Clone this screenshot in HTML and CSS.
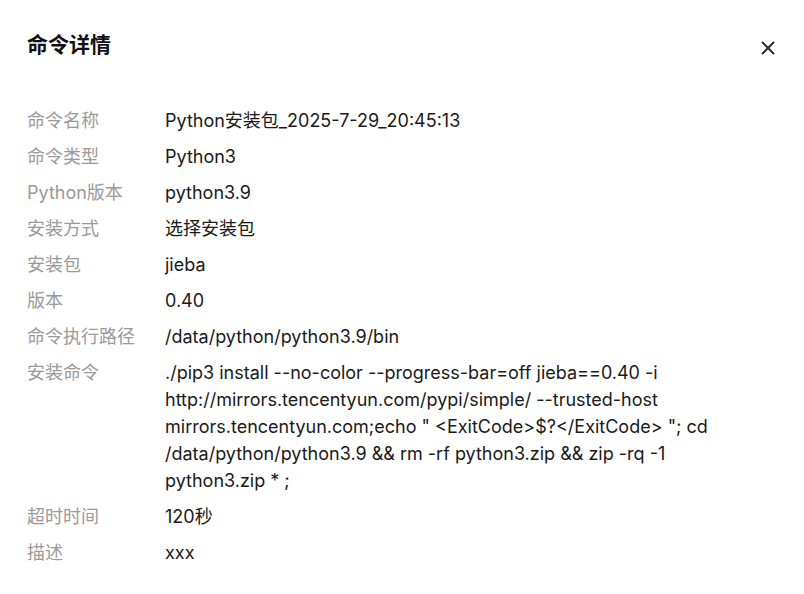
FILE: index.html
```html
<!DOCTYPE html>
<html lang="zh-CN">
<head>
<meta charset="utf-8">
<link rel="stylesheet" href="styles.css">
</head>
<body>
<div class="dialog">
  <div class="header">
    <h1 class="title">命令详情</h1>
    <button class="close" aria-label="关闭">
      <svg width="14" height="14" viewBox="0 0 14 14"><path d="M1.5 1.5L12.5 12.5M12.5 1.5L1.5 12.5" stroke="#222" stroke-width="1.8" stroke-linecap="round"/></svg>
    </button>
  </div>
  <dl class="details">
    <div class="row"><dt>命令名称</dt><dd>Python安装包_2025-7-29_20:45:13</dd></div>
    <div class="row"><dt>命令类型</dt><dd>Python3</dd></div>
    <div class="row"><dt>Python版本</dt><dd>python3.9</dd></div>
    <div class="row"><dt>安装方式</dt><dd>选择安装包</dd></div>
    <div class="row"><dt>安装包</dt><dd>jieba</dd></div>
    <div class="row"><dt>版本</dt><dd>0.40</dd></div>
    <div class="row"><dt>命令执行路径</dt><dd>/data/python/python3.9/bin</dd></div>
    <div class="row"><dt>安装命令</dt><dd>./pip3 install --no-color --progress-bar=off jieba==0.40 -i http://mirrors.tencentyun.com/pypi/simple/ --trusted-host mirrors.tencentyun.com;echo " &lt;ExitCode&gt;$?&lt;/ExitCode&gt; "; cd /data/python/python3.9 &amp;&amp; rm -rf python3.zip &amp;&amp; zip -rq -1 python3.zip * ;</dd></div>
    <div class="row"><dt>超时时间</dt><dd>120秒</dd></div>
    <div class="row"><dt>描述</dt><dd>xxx</dd></div>
  </dl>
</div>
</body>
</html>
```
FILE: styles.css
```css
* { box-sizing: border-box; }
html, body { margin: 0; padding: 0; background: #fff; }
body {
  font-family: "Inter", "Noto Sans CJK SC", sans-serif;
  color: #1a1a1a;
}
.dialog {
  width: 804px;
  height: 594px;
  padding: 30px 27px 0 27px;
}
.header {
  display: flex;
  align-items: center;
  justify-content: space-between;
  height: 30px;
}
.title {
  margin: 0;
  font-size: 21px;
  font-weight: 700;
  line-height: 30px;
  color: #111;
}
.close {
  border: 0;
  background: none;
  padding: 0;
  margin-right: 1px;
  margin-top: 6px;
  width: 16px;
  height: 16px;
  display: flex;
  align-items: center;
  justify-content: center;
  cursor: pointer;
}
.details {
  margin: 47px 0 0 0;
  display: flex;
  flex-direction: column;
  gap: 9px;
}
.row {
  display: flex;
  font-size: 18px;
  line-height: 27px;
}
.row dt {
  width: 138px;
  flex: none;
  color: #9a9a9a;
}
.row dd {
  margin: 0;
  flex: 1;
  color: #1a1a1a;
  overflow-wrap: break-word;
  padding-right: 40px;
}
```
